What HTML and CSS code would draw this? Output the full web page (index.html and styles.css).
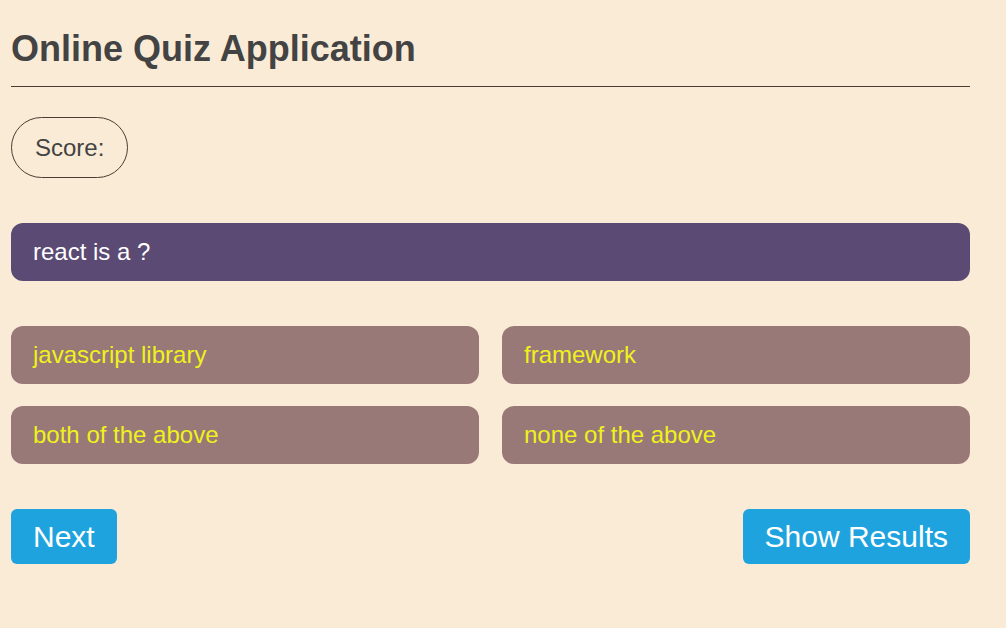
FILE: index.html
```html
<!DOCTYPE html>
<html>
<head>
<meta charset="utf-8">
<link rel="stylesheet" href="styles.css">
</head>
<body>
<div class="app">
  <h1 class="title">Online Quiz Application</h1>
  <div class="score">Score:</div>
  <div class="question">react is a ?</div>
  <div class="options">
    <div class="option">javascript library</div>
    <div class="option">framework</div>
    <div class="option">both of the above</div>
    <div class="option">none of the above</div>
  </div>
  <div class="actions">
    <button class="btn">Next</button>
    <button class="btn">Show Results</button>
  </div>
</div>
</body>
</html>
```
FILE: styles.css
```css
html, body {
  margin: 0;
  padding: 0;
  background: #faebd7;
  font-family: "Liberation Sans", Arial, sans-serif;
}
.app {
  width: 959px;
  margin-left: 11px;
}
.title {
  margin: 28px 0 0;
  padding-bottom: 16px;
  border-bottom: 1px solid #4b3d33;
  font-size: 36px;
  font-weight: bold;
  color: #434343;
}
.score {
  display: inline-block;
  margin-top: 30px;
  padding: 16px 23px;
  border: 1px solid #4b3d33;
  border-radius: 31px;
  font-size: 24px;
  line-height: 27px;
  color: #434343;
}
.question {
  margin-top: 45px;
  padding: 15px 22px;
  background: #5b4a74;
  color: #ffffff;
  border-radius: 12px;
  font-size: 24px;
  line-height: 28px;
}
.options {
  margin-top: 45px;
  display: grid;
  grid-template-columns: 1fr 1fr;
  column-gap: 23px;
  row-gap: 22px;
}
.option {
  padding: 15px 22px;
  background: #997878;
  color: #eef21c;
  border-radius: 12px;
  font-size: 24px;
  line-height: 28px;
}
.actions {
  margin-top: 45px;
  display: flex;
  justify-content: space-between;
}
.btn {
  font-family: "Liberation Sans", Arial, sans-serif;
  font-size: 30px;
  line-height: 35px;
  padding: 10px 22px;
  border: none;
  border-radius: 6px;
  background: #1fa3de;
  color: #ffffff;
}
```
